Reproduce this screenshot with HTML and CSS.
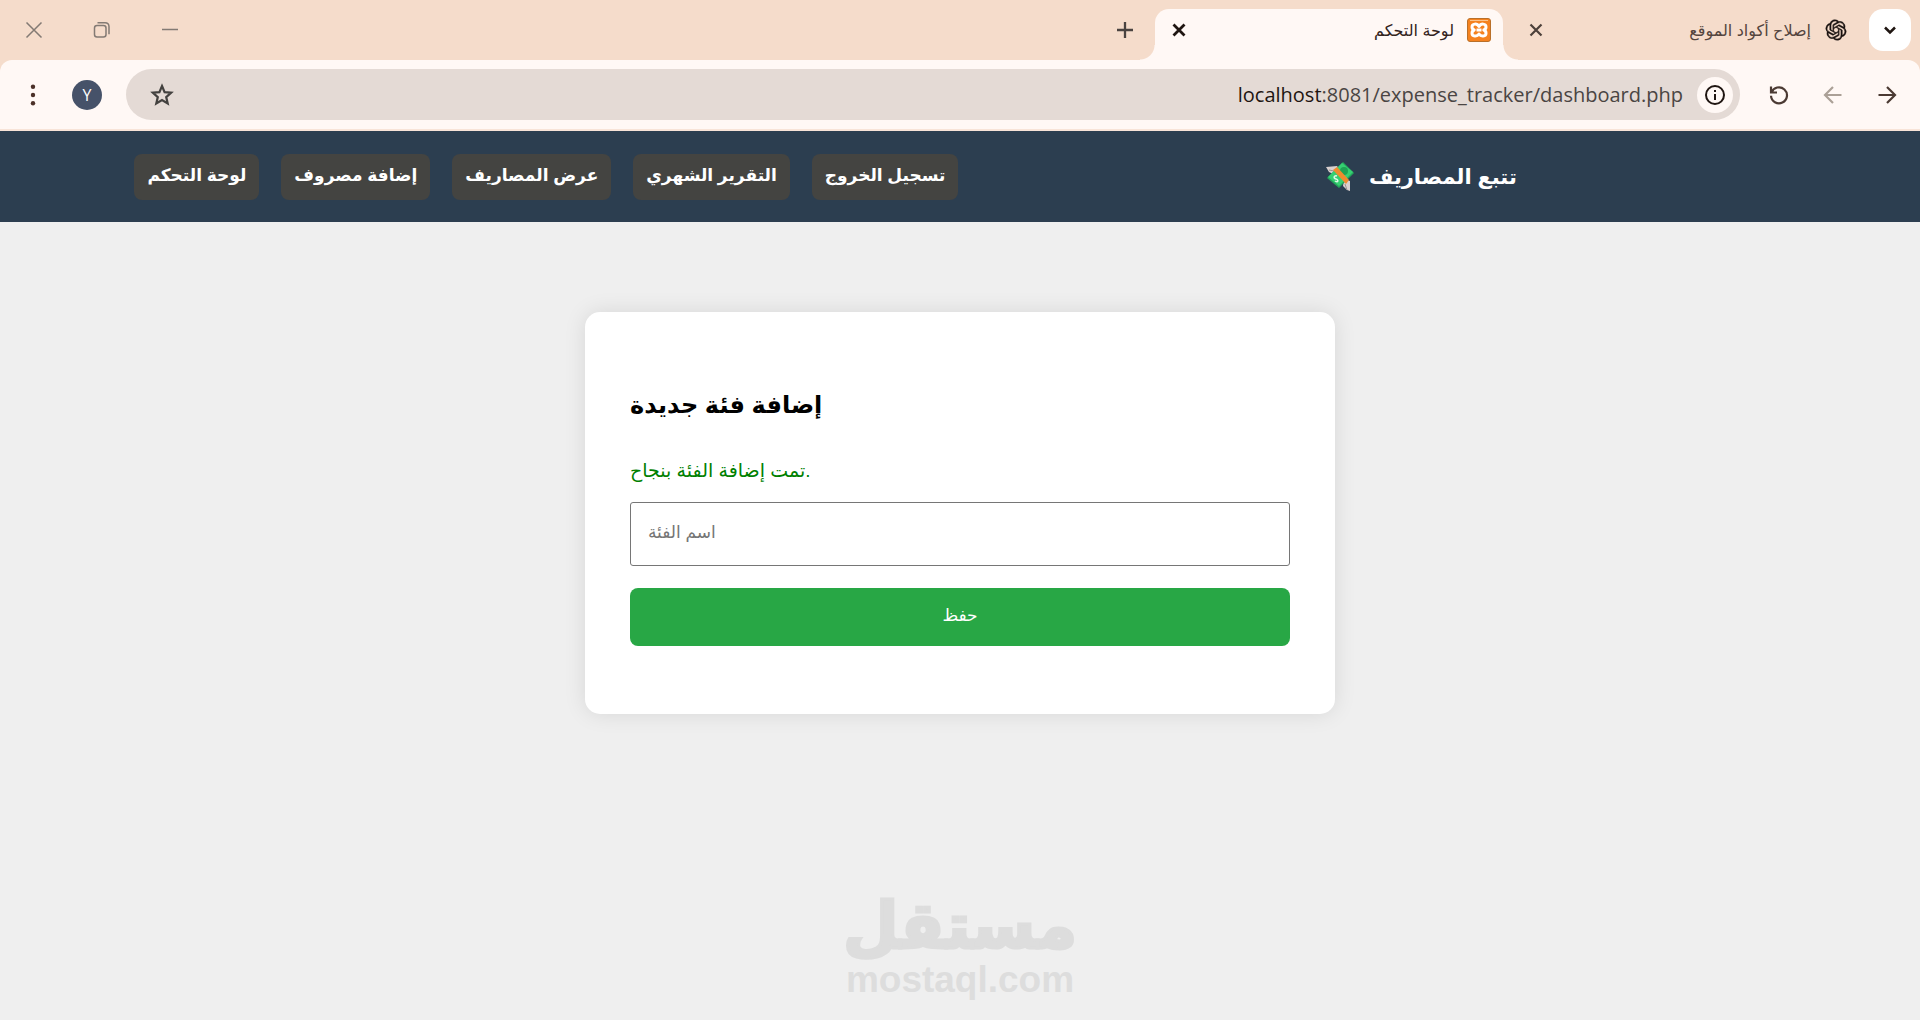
FILE: index.html
```html
<!DOCTYPE html>
<html lang="ar">
<head>
  <meta charset="UTF-8">
  <title>لوحة التحكم</title>
  <meta name="viewport" content="width=device-width, initial-scale=1">
  <link rel="stylesheet" href="styles.css">
</head>
<body>
  <div class="browser" dir="rtl">
    <div class="tab-strip">
      <button class="tab-search" aria-label="البحث في علامات التبويب">
        <svg width="24" height="24" viewBox="0 0 24 24"><path d="M7 9.500l5 5 5-5" fill="none" stroke="#1f1511" stroke-width="2.500"/></svg>
      </button>
      <div class="tab">
        <svg class="tab-icon" width="24" height="24" viewBox="-2 -2 28 28"><path fill="#1a1210" stroke="#1a1210" stroke-width=".5" d="M22.2819 9.8211a5.9847 5.9847 0 0 0-.5157-4.9108 6.0462 6.0462 0 0 0-6.5098-2.9A6.0651 6.0651 0 0 0 4.9807 4.1818a5.9847 5.9847 0 0 0-3.9977 2.9 6.0462 6.0462 0 0 0 .7427 7.0966 5.98 5.98 0 0 0 .511 4.9107 6.051 6.051 0 0 0 6.5146 2.9001A5.9847 5.9847 0 0 0 13.2599 24a6.0557 6.0557 0 0 0 5.7718-4.2058 5.9894 5.9894 0 0 0 3.9977-2.9001 6.0557 6.0557 0 0 0-.7475-7.0729zm-9.022 12.6081a4.4755 4.4755 0 0 1-2.8764-1.0408l.1419-.0804 4.7783-2.7582a.7948.7948 0 0 0 .3927-.6813v-6.7369l2.02 1.1686a.071.071 0 0 1 .038.052v5.5826a4.504 4.504 0 0 1-4.4945 4.4944zm-9.6607-4.1254a4.4708 4.4708 0 0 1-.5346-3.0137l.142.0852 4.783 2.7582a.7712.7712 0 0 0 .7806 0l5.8428-3.3685v2.3324a.0804.0804 0 0 1-.0332.0615L9.74 19.9502a4.4992 4.4992 0 0 1-6.1408-1.6464zM2.3408 7.8956a4.485 4.485 0 0 1 2.3655-1.9728V11.6a.7664.7664 0 0 0 .3879.6765l5.8144 3.3543-2.0201 1.1685a.0757.0757 0 0 1-.071 0l-4.8303-2.7865A4.504 4.504 0 0 1 2.3408 7.872zm16.5963 3.8558L13.1038 8.364 15.1192 7.2a.0757.0757 0 0 1 .071 0l4.8303 2.7913a4.4944 4.4944 0 0 1-.6765 8.1042v-5.6772a.79.79 0 0 0-.407-.667zm2.0107-3.0231l-.142-.0852-4.7735-2.7818a.7759.7759 0 0 0-.7854 0L9.409 9.2297V6.8974a.0662.0662 0 0 1 .0284-.0615l4.8303-2.7866a4.4992 4.4992 0 0 1 6.6802 4.66zM8.3065 12.863l-2.02-1.1638a.0804.0804 0 0 1-.038-.0567V6.0742a4.4992 4.4992 0 0 1 7.3757-3.4537l-.142.0805L8.704 5.459a.7948.7948 0 0 0-.3927.6813zm1.0976-2.3654l2.602-1.4998 2.6069 1.4998v2.9994l-2.5974 1.4997-2.6067-1.4997Z"/></svg>
        <span class="tab-title">إصلاح أكواد الموقع</span>
        <button class="tab-close" aria-label="إغلاق">
          <svg width="24" height="24" viewBox="0 0 24 24"><path d="M6.500 6.500l11 11M17.500 6.500l-11 11" stroke="#4d403a" stroke-width="2.200"/></svg>
        </button>
      </div>
      <div class="tab active">
        <svg class="tab-icon" width="24" height="24" viewBox="0 0 24 24">
          <rect x=".5" y=".5" width="23" height="23" rx="2.500" fill="#f5821f" stroke="#b9702a"/>
          <path d="M3 2.500h18" stroke="#fbc48c"/>
          <path d="M12 8.500C10 5 5 5.500 5 9c0 1.800 1 2.500 2.200 3C6 12.500 5 13.500 5 15.200c0 3.300 5 3.800 7 .8 2 3 7 2.500 7-.8 0-1.700-1-2.700-2.200-3.200C18 11.500 19 10.800 19 9c0-3.500-5-4-7-.5zM9.500 12h5" fill="none" stroke="#fff" stroke-width="3" stroke-linejoin="round"/>
        </svg>
        <span class="tab-title">لوحة التحكم</span>
        <button class="tab-close" aria-label="إغلاق">
          <svg width="24" height="24" viewBox="0 0 24 24"><path d="M6.500 6.500l11 11M17.500 6.500l-11 11" stroke="#1f1511" stroke-width="2.800"/></svg>
        </button>
      </div>
      <button class="new-tab" aria-label="علامة تبويب جديدة">
        <svg width="24" height="24" viewBox="0 0 24 24"><path d="M12 4v16M4 12h16" stroke="#4a4340" stroke-width="2.300"/></svg>
      </button>
      <div class="window-controls">
        <button aria-label="تصغير">
          <svg width="18" height="18" viewBox="0 0 18 18"><path d="M1 8.500h16" stroke="#837a74" stroke-width="1.500"/></svg>
        </button>
        <button aria-label="استعادة">
          <svg width="18" height="18" viewBox="0 0 18 18" fill="none" stroke="#837a74" stroke-width="1.500"><rect x="1.500" y="4.500" width="11.500" height="11.500" rx="2.500"/><path d="M4.500 1.800h7.500q4 0 4 4v7.500"/></svg>
        </button>
        <button aria-label="إغلاق النافذة">
          <svg width="18" height="18" viewBox="0 0 18 18"><path d="M1.500 1.500l15 15M16.500 1.500l-15 15" stroke="#837a74" stroke-width="1.500"/></svg>
        </button>
      </div>
    </div>
    <div class="toolbar">
      <div class="tool-group">
        <button aria-label="التقدم">
          <svg width="24" height="24" viewBox="0 0 24 24"><path d="M3.500 12h16M12 4l8 8-8 8" fill="none" stroke="#4b3a33" stroke-width="2.200"/></svg>
        </button>
        <button aria-label="الرجوع">
          <svg width="24" height="24" viewBox="0 0 24 24"><path d="M20.500 12h-16M12 4l-8 8 8 8" fill="none" stroke="#aba097" stroke-width="2.200"/></svg>
        </button>
        <button aria-label="إعادة التحميل">
          <svg width="24" height="24" viewBox="0 0 24 24"><path d="M4 3.500v6h6M4.500 9.500A8 8 0 1 1 4 12.800" fill="none" stroke="#4b3a33" stroke-width="2.200"/></svg>
        </button>
      </div>
      <div class="address-bar">
        <button class="site-info" aria-label="معلومات الموقع">
          <svg width="24" height="24" viewBox="0 0 24 24"><circle cx="12" cy="12" r="9" fill="none" stroke="#1f1511" stroke-width="2"/><path d="M12 11v6M12 7v2" stroke="#1f1511" stroke-width="2"/></svg>
        </button>
        <span class="url" dir="ltr"><b>localhost</b>:8081/expense_tracker/dashboard.php</span>
        <button class="bookmark" aria-label="إضافة إشارة">
          <svg width="24" height="24" viewBox="0 0 24 24"><path d="M12 3l2.600 6.100 6.600.6-5 4.400 1.500 6.400L12 17.100l-5.700 3.400 1.500-6.400-5-4.400 6.600-.6z" fill="none" stroke="#43413f" stroke-width="2.200"/></svg>
        </button>
      </div>
      <div class="tool-group">
        <button class="profile" aria-label="الملف الشخصي">Y</button>
        <button aria-label="القائمة">
          <svg width="24" height="24" viewBox="0 0 24 24" fill="#4b3028"><circle cx="12" cy="3.700" r="2.200"/><circle cx="12" cy="12" r="2.200"/><circle cx="12" cy="20.300" r="2.200"/></svg>
        </button>
      </div>
    </div>
  </div>

  <header class="site-header">
    <nav>
      <a href="#">لوحة التحكم</a>
      <a href="#">إضافة مصروف</a>
      <a href="#">عرض المصاريف</a>
      <a href="#">التقرير الشهري</a>
      <a href="#">تسجيل الخروج</a>
    </nav>
    <div class="logo">
      <svg width="30" height="30" viewBox="0 0 30 30">
        <path d="M1 5l11-1 2 3-6 5-4-2z" fill="#d9d0cf"/>
        <path d="M19 17l6 2v10l-3-1-4-4z" fill="#d9d0cf"/>
        <path d="M4 8l5 1M20 22l2 6" stroke="#9c9190"/>
        <path d="M18 0l11 11-15 15L2 16z" fill="#22a65a"/>
        <path d="M17 1l11 9-14 14L3 15z" fill="#36cf72"/>
        <circle cx="19" cy="9" r="4" fill="#1fa354"/>
        <path d="M8 8l4-3 12 13-3 4z" fill="#ef8b2e"/>
        <path d="M12 14c-3-1-4 2-1 3s2 4-1 2" fill="none" stroke="#dff7e7" stroke-width="1.500"/>
      </svg>
      <span>تتبع المصاريف</span>
    </div>
  </header>

  <main class="container">
    <h2>إضافة فئة جديدة</h2>
    <p class="success">تمت إضافة الفئة بنجاح.</p>
    <form>
      <input type="text" name="category" placeholder="اسم الفئة" aria-label="اسم الفئة">
      <button type="button">حفظ</button>
    </form>
  </main>

  <footer class="watermark">
    <span class="brand">مستقل</span>
    <span class="domain">mostaql.com</span>
  </footer>
</body>
</html>
```
FILE: styles.css
```css
* {
  box-sizing: border-box;
}
body {
  margin: 0;
  min-height: 100vh;
  display: flex;
  flex-direction: column;
  background: #efefef;
  font-family: "Liberation Sans", "DejaVu Sans", sans-serif;
}
button {
  border: 0;
  padding: 0;
  background: none;
  cursor: pointer;
  font-family: inherit;
}
svg {
  display: block;
}

/* browser bar */
.browser {
  background: #f5dccb;
}
.tab-strip {
  display: flex;
  gap: 9px;
  height: 60px;
  padding: 9px 9px 0 0;
}
.tab-strip button {
  display: flex;
  align-items: center;
  justify-content: center;
}
.tab-search,
.new-tab {
  width: 42px;
  height: 42px;
}
.tab-search {
  background: #fff;
  border-radius: 14px;
}
.tab {
  position: relative;
  display: flex;
  align-items: center;
  gap: 13px;
  width: 348px;
  padding: 0 12px 9px;
  color: #54453e;
  font-size: 16px;
}
.tab.active {
  background: #fff8f5;
  border-radius: 14px 14px 0 0;
  color: #33231c;
}
/* rounded feet of the active tab */
.tab.active::before,
.tab.active::after {
  content: "";
  position: absolute;
  bottom: 0;
  width: 15px;
  height: 15px;
}
.tab.active::before {
  left: -15px;
  background: radial-gradient(circle at 0 0, transparent 14px, #fff8f5 15px);
}
.tab.active::after {
  right: -15px;
  background: radial-gradient(circle at 100% 0, transparent 14px, #fff8f5 15px);
}
.tab-title {
  flex: 1;
}
.window-controls {
  display: flex;
  height: 42px;
  margin-right: auto;
}
.window-controls button {
  width: 68px;
}
.toolbar {
  display: flex;
  align-items: center;
  gap: 20px;
  height: 71px;
  padding: 0 14px;
  background: #fff8f5;
  border-radius: 12px 12px 0 0;
  border-bottom: 2px solid #f8e4d8;
}
.tool-group {
  display: flex;
  align-items: center;
  gap: 16px;
}
.tool-group button {
  display: flex;
  align-items: center;
  justify-content: center;
  width: 38px;
  height: 38px;
}
.tool-group .profile {
  width: 30px;
  height: 30px;
  margin: 0 4px;
  border-radius: 50%;
  background: #465269;
  color: #fff;
  font-family: "Open Sans", sans-serif;
  font-size: 16px;
}
.address-bar {
  flex: 1;
  display: flex;
  align-items: center;
  gap: 14px;
  height: 51px;
  padding: 0 7px 0 24px;
  background: #e4dad5;
  border-radius: 26px;
}
.site-info {
  display: flex;
  align-items: center;
  justify-content: center;
  width: 36px;
  height: 36px;
  border-radius: 50%;
  background: #fff8f5;
}
.url {
  flex: 1;
  text-align: right;
  color: #4a4543;
  font-family: "Open Sans", sans-serif;
  font-size: 20px;
}
.url b {
  color: #1f1511;
  font-weight: normal;
}

/* site header */
.site-header {
  display: flex;
  align-items: center;
  justify-content: space-between;
  height: 91px;
  padding: 0 21% 0 7%;
  background: #2c3e50;
  color: #fff;
  font-weight: bold;
}
.site-header nav {
  display: flex;
  gap: 22px;
}
.site-header a {
  height: 46px;
  padding: 0 13px;
  border-radius: 8px;
  background: #444441;
  color: #fff;
  font-size: 17px;
  line-height: 44px;
  text-decoration: none;
}
.logo {
  display: flex;
  align-items: center;
  gap: 14px;
  font-size: 21px;
}

/* form card */
.container {
  width: 750px;
  max-width: 100%;
  margin: 90px auto 0;
  padding: 68px 45px;
  background: #fff;
  border-radius: 15px;
  box-shadow: 0 0 22px rgba(0, 0, 0, 0.1);
}
.container h2 {
  margin: 0 0 22px;
  font-size: 24px;
  line-height: 50px;
}
.success {
  margin: 0 0 12px;
  color: green;
  font-size: 19px;
  line-height: 38px;
}
.container input {
  display: block;
  width: 100%;
  height: 64px;
  margin-bottom: 22px;
  padding: 0 17px 2px;
  border: 1px solid #767676;
  border-radius: 3px;
  font-family: inherit;
  font-size: 17px;
}
.container input::placeholder {
  color: #757575;
}
.container form button {
  width: 100%;
  height: 58px;
  padding-bottom: 4px;
  border-radius: 8px;
  background: #28a745;
  color: #fff;
  font-size: 17px;
}

.watermark {
  display: flex;
  flex-direction: column;
  align-items: center;
  margin: auto 0 18px;
  color: #ddd;
  font-weight: bold;
}
.brand {
  font-size: 64px;
  line-height: 64px;
  -webkit-text-stroke: 3px #ddd;
}
.domain {
  font-size: 37px;
  line-height: 44px;
}
```
